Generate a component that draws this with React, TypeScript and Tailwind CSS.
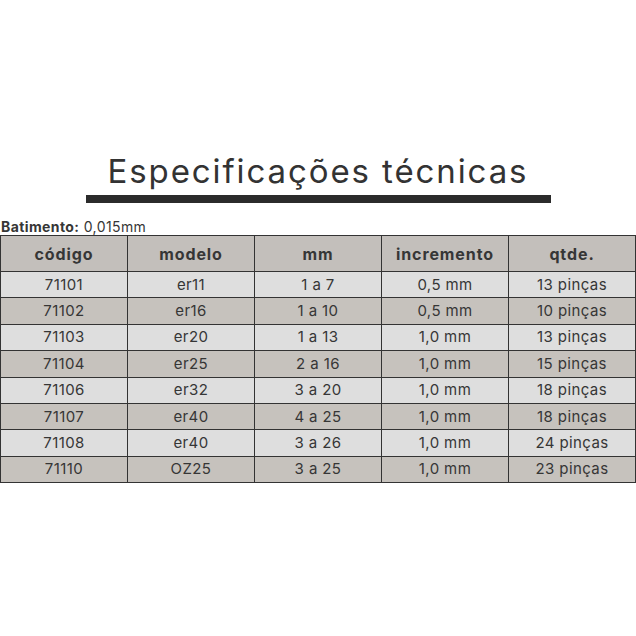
const rows = [
  ['71101', 'er11', '1 a 7', '0,5 mm', '13 pinças'],
  ['71102', 'er16', '1 a 10', '0,5 mm', '10 pinças'],
  ['71103', 'er20', '1 a 13', '1,0 mm', '13 pinças'],
  ['71104', 'er25', '2 a 16', '1,0 mm', '15 pinças'],
  ['71106', 'er32', '3 a 20', '1,0 mm', '18 pinças'],
  ['71107', 'er40', '4 a 25', '1,0 mm', '18 pinças'],
  ['71108', 'er40', '3 a 26', '1,0 mm', '24 pinças'],
  ['71110', 'OZ25', '3 a 25', '1,0 mm', '23 pinças'],
];

const headers = ['código', 'modelo', 'mm', 'incremento', 'qtde.'];

export default function App() {
  return (
    <div className="w-[636px] h-[636px] bg-white text-[#363636] font-['Inter',sans-serif]">
      <div className="pt-[151px] flex flex-col items-center">
        <h1 className="text-[33px] leading-[40px] font-normal tracking-[1.9px] text-[#333333]">
          Especificações técnicas
        </h1>
        <div className="mt-[4px] w-[465px] h-[8px] bg-[#2b2b2b]"></div>
      </div>
      <div className="mt-[16px] px-[1px] text-[14px] leading-[16px] tracking-[0.4px]">
        <span className="font-bold">Batimento:</span> 0,015mm
      </div>
      <table className="w-[636px] border-collapse table-fixed text-[15px] tracking-[0.4px]">
        <thead>
          <tr className="h-[36px] bg-[#c3bfbb]">
            {headers.map((h) => (
              <th key={h} className="border border-[#333333] font-bold text-[16px] tracking-[0.9px] text-center">
                {h}
              </th>
            ))}
          </tr>
        </thead>
        <tbody>
          {rows.map((r, i) => (
            <tr key={r[0]} className={i % 2 === 0 ? 'h-[26.4px] bg-[#dedede]' : 'h-[26.4px] bg-[#c6c2bd]'}>
              {r.map((c, j) => (
                <td key={j} className="border border-[#333333] text-center leading-[18px] p-0">
                  {c}
                </td>
              ))}
            </tr>
          ))}
        </tbody>
      </table>
    </div>
  );
}
